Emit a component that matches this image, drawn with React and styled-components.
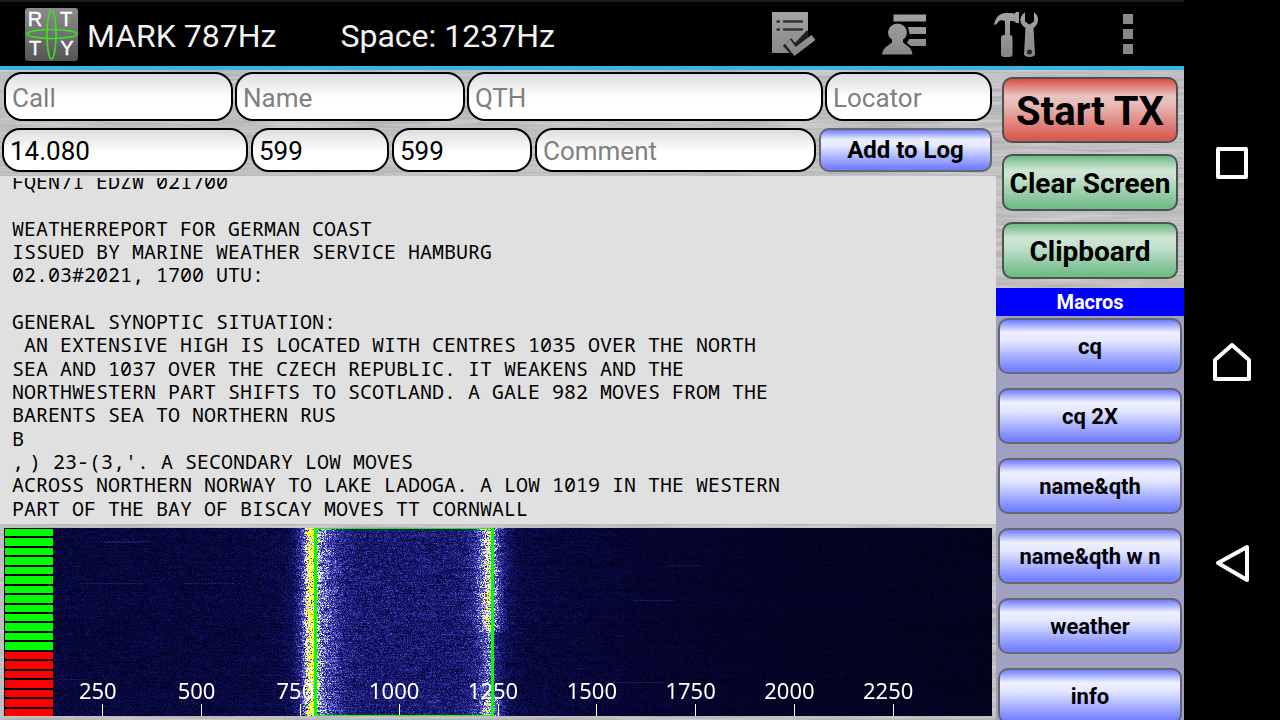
import React, { useEffect, useRef } from 'react';
import styled, { createGlobalStyle, css } from 'styled-components';

const GlobalStyle = createGlobalStyle`
  * {
    box-sizing: border-box;
  }
  body {
    margin: 0;
    background: #000;
    font-family: Roboto, sans-serif;
  }
  input, button {
    font-family: inherit;
    margin: 0;
  }
`;

const metal = `url("data:image/svg+xml,%3Csvg xmlns='http://www.w3.org/2000/svg' width='512' height='256'%3E%3Cfilter id='m' x='0' y='0' width='100%25' height='100%25' color-interpolation-filters='sRGB'%3E%3CfeTurbulence type='fractalNoise' baseFrequency='0.012 0.35' numOctaves='3' seed='4' stitchTiles='stitch'/%3E%3CfeColorMatrix values='0.22 0 0 0 0.64 0.22 0 0 0 0.64 0.22 0 0 0 0.64 0 0 0 0 1'/%3E%3C/filter%3E%3Crect width='512' height='256' filter='url(%23m)'/%3E%3C/svg%3E")`;

const Screen = styled.div`
  display: flex;
  height: 100vh;
  overflow: hidden;
`;
const AppPane = styled.div`
  flex: 1;
  min-width: 0;
  display: flex;
  flex-direction: column;
`;
const ActionBar = styled.header`
  flex: none;
  display: flex;
  align-items: center;
  height: 70px;
  padding: 2px 32px 0 24px;
  background: #000;
  border-top: 2px solid #1c1c1c;
  border-bottom: 4px solid #33b5e5;
  color: #f3f3f3;
`;
const Title = styled.h1`
  flex: 1;
  display: flex;
  gap: 64px;
  margin: 0 0 0 8px;
  padding-top: 2px;
  font-size: 32px;
  font-weight: 400;
  line-height: 40px;
  white-space: nowrap;
`;
const Actions = styled.div`
  display: flex;
  gap: 64px;
`;
const IconButton = styled.button`
  display: flex;
  padding: 0;
  border: none;
  background: none;
  cursor: pointer;
`;
const Body = styled.div`
  flex: 1;
  min-height: 0;
  display: flex;
  background: #bdbdbd ${metal};
`;
const Main = styled.main`
  flex: 1;
  min-width: 0;
  display: flex;
  flex-direction: column;
  gap: 4px;
  padding: 2px 0 4px;
`;
const LogForm = styled.form`
  display: flex;
  flex-direction: column;
  gap: 7px;
`;
const StationRow = styled.div`
  display: grid;
  grid-template-columns: 229fr 230fr 356fr 167fr;
  gap: 2px;
  height: 49px;
  padding: 0 4px;
`;
const ReportRow = styled.div`
  display: grid;
  grid-template-columns: 246fr 138fr 140fr 281fr 173fr;
  gap: 3px;
  height: 44px;
  padding: 0 4px 0 2px;
`;
const Field = styled.input`
  min-width: 0;
  width: 100%;
  height: 100%;
  padding: 2px 6px 0;
  border: 2px solid #000;
  border-radius: 18px;
  background: linear-gradient(#dedede, #fff 55%);
  color: #000;
  font-size: 26px;
  outline: none;
  &::placeholder {
    color: #808080;
    opacity: 1;
  }
`;

const tones = {
  blue: css`
    border-color: #66666e;
    background: linear-gradient(#6f7dff, #eef0ff 24%, #e4e8ff 40%, #727fff 96%);
  `,
  red: css`
    border-color: #505050;
    background: linear-gradient(#d94f46, #eac4c4 28%, #e8bcba 40%, #d95a50 96%);
  `,
  green: css`
    border-color: #505050;
    background: linear-gradient(#6cba84, #cde5d3 26%, #c8e2cf 40%, #70bc88 96%);
  `,
};
const PushButton = styled.button`
  flex: none;
  width: 100%;
  height: ${({ $height }) => $height}px;
  padding: ${({ $drop }) => $drop || 0}px 0 0;
  border: 2px solid;
  border-radius: 10px;
  color: #000;
  font-size: ${({ $size }) => $size}px;
  font-weight: 700;
  white-space: nowrap;
  cursor: pointer;
  ${({ $tone }) => tones[$tone]}
`;

const Received = styled.section`
  flex: 1;
  min-height: 0;
  display: flex;
  flex-direction: column;
  justify-content: flex-end;
  padding-bottom: 4px;
  border-top: 2px solid #e0e0e0;
  background: #e0e0e0;
  overflow: hidden;
`;
const Lines = styled.div`
  flex: none;
  display: grid;
  grid-auto-rows: 1fr;
  align-items: center;
  height: 350px;
  padding: 0 12px;
  color: #000;
  font-family: 'Droid Sans Mono', 'Noto Sans Mono', 'DejaVu Sans Mono', monospace;
  font-size: 20px;
  line-height: 23px;
  white-space: pre;
`;
const ControlCode = styled.span`
  display: inline-block;
  width: 5px;
`;

const Waterfall = styled.section`
  flex: none;
  display: grid;
  height: 188px;
  margin: 0 4px;
  background: #000;
  overflow: hidden;
  position: relative;
`;
const Spectrum = styled.canvas`
  grid-area: 1 / 1;
  display: block;
  width: 100%;
  height: 100%;
`;
const Meter = styled.div`
  grid-area: 1 / 1;
  display: grid;
  grid-auto-rows: 1fr;
  gap: 2px;
  width: 50px;
  padding: 1px 1px 0;
  background: #000;
`;
const Level = styled.span`
  background: ${({ $high }) => ($high ? '#00ff00' : '#ff0000')};
`;
const ShiftBox = styled.div`
  position: absolute;
  top: 0;
  bottom: 0;
  margin: 0 -1px;
  border: solid #00ff00;
  border-width: 1px 3px;
`;
const Tick = styled.div`
  position: absolute;
  bottom: 0;
  display: flex;
  flex-direction: column;
  align-items: center;
  width: 80px;
  margin-left: -45px;
  color: #fff;
  font-family: 'Noto Sans', sans-serif;
  font-size: 22px;
  line-height: 28px;
  &::after {
    content: '';
    width: 1px;
    height: 12px;
    margin-left: 10px;
    background: #fff;
  }
`;

const Side = styled.aside`
  flex: none;
  display: flex;
  flex-direction: column;
  width: 188px;
`;
const Commands = styled.div`
  flex: none;
  display: flex;
  flex-direction: column;
  gap: 11px;
  padding: 7px 6px 9px;
`;
const MacroTitle = styled.h2`
  flex: none;
  margin: 0;
  background: #0000ff;
  color: #fff;
  font-size: 20px;
  font-weight: 700;
  line-height: 28px;
  text-align: center;
`;
const MacroList = styled.div`
  flex: 1;
  min-height: 0;
  display: flex;
  flex-direction: column;
  gap: 14px;
  padding: 2px 2px 0;
  background: #a0a0c0;
  overflow: hidden;
`;

const NavBar = styled.nav`
  flex: none;
  display: flex;
  flex-direction: column;
  align-items: center;
  justify-content: center;
  gap: 160px;
  width: 96px;
  padding-top: 6px;
  background: #000;
`;

const Logo = () => (
  <svg width="55" height="55" viewBox="0 0 55 55" role="img" aria-label="RTTY">
    <defs>
      <linearGradient id="logoBg" x1="0" y1="0" x2="0" y2="1">
        <stop offset="0" stopColor="#8c8c8c" />
        <stop offset="1" stopColor="#555" />
      </linearGradient>
    </defs>
    <rect x="1" y="0" width="53" height="53" rx="3" fill="url(#logoBg)" />
    <g fill="#fff" stroke="#fff" strokeWidth="0.4" fontFamily="Liberation Sans, sans-serif" fontSize="20" textAnchor="middle">
      <text x="11" y="18">R</text>
      <text x="42" y="18">T</text>
      <text x="11" y="47">T</text>
      <text x="43" y="47">Y</text>
    </g>
    <g fill="none" stroke="#3be01f" strokeWidth="1.7">
      <ellipse cx="27.5" cy="26.5" rx="4.5" ry="24.5" />
      <ellipse cx="28" cy="26" rx="25" ry="4.5" />
    </g>
  </svg>
);

const GreyDef = ({ id }) => (
  <defs>
    <linearGradient id={id} x1="0" y1="0" x2="0" y2="48" gradientUnits="userSpaceOnUse">
      <stop offset="0" stopColor="#a4a4a4" />
      <stop offset="1" stopColor="#858585" />
    </linearGradient>
  </defs>
);

const LogIcon = () => (
  <svg width="48" height="48" viewBox="0 0 48 48">
    <GreyDef id="g1" />
    <path fill="url(#g1)" d="M4 1h36v41H4z" />
    <path stroke="#333" strokeWidth="2.4" strokeLinecap="round" d="M9.5 10.5h1.5M16 10.5h18M9.5 18.5h1.5M16 18.5h18" />
    <path stroke="#222" strokeWidth="11" fill="none" d="M19 31l8 9 16-17" />
    <path fill="#000" d="M40 14h8v34h-8zM30 42l10-11v17H20v-6z" />
    <path stroke="url(#g1)" strokeWidth="6.5" fill="none" d="M19.5 30.5l7.5 10 18.500-14" />
  </svg>
);

const ContactIcon = () => (
  <svg width="48" height="48" viewBox="0 0 48 48">
    <GreyDef id="g2" />
    <g fill="url(#g2)">
      <path d="M13.5 3.5H46v7H13.5zM28 16h18v7H29.5zM29 28h17v7H31l-4-3z" />
      <ellipse cx="17.5" cy="21.5" rx="9.5" ry="9" />
      <path d="M12 27h11v4c1 3 9 4 9.5 12.5H2C3 35 11 34 12 31z" />
    </g>
  </svg>
);

const ToolsIcon = () => (
  <svg width="48" height="48" viewBox="0 0 48 48">
    <GreyDef id="g3" />
    <g fill="url(#g3)">
      <path d="M2 14c1-7 5-12 12-12h6c2 1 3 1 4-1h3v11h-3c-1-2-3-2-6-2v14h-5V10c-4-2-7 0-8 3z" />
      <rect x="9" y="24" width="11.5" height="22" rx="3" />
      <path d="M33 1.5v9l4.5 3 4.5-3v-9c3 1.5 4.5 5 4 8.5-.5 3.5-2.5 5.5-4.5 7l1.500 26c0 4-11 4-11 0l1.500-26c-2.5-1.5-4.5-3.5-5-7-.5-3.5 1.500-7 4.500-8.500z" />
    </g>
    <circle cx="37.5" cy="41" r="2.5" fill="#222" />
  </svg>
);

const MoreIcon = () => (
  <svg width="48" height="48" viewBox="0 0 48 48">
    <path fill="#888" d="M19 3h10v10H19zM19 18h10v10H19zM19 33h10v10H19z" />
  </svg>
);

const NavIcon = ({ d }) => (
  <svg width="40" height="40" viewBox="0 0 40 40" fill="none" stroke="#fff" strokeWidth="4" strokeLinejoin="round">
    <path d={d} />
  </svg>
);

const MAX_HZ = 2500;
const MARK = 787;
const SPACE = 1237;
const percent = hz => `${(hz / MAX_HZ) * 100}%`;

// \x07 is an unprintable code that the receiver leaves in the text
const received = [
  'FQEN71 EDZW 021700',
  '',
  'WEATHERREPORT FOR GERMAN COAST',
  'ISSUED BY MARINE WEATHER SERVICE HAMBURG',
  '02.03#2021, 1700 UTU:',
  '',
  'GENERAL SYNOPTIC SITUATION:',
  ' AN EXTENSIVE HIGH IS LOCATED WITH CENTRES 1035 OVER THE NORTH',
  'SEA AND 1037 OVER THE CZECH REPUBLIC. IT WEAKENS AND THE',
  'NORTHWESTERN PART SHIFTS TO SCOTLAND. A GALE 982 MOVES FROM THE',
  'BARENTS SEA TO NORTHERN RUS',
  'B',
  ",\x07) 23-(3,'. A SECONDARY LOW MOVES",
  'ACROSS NORTHERN NORWAY TO LAKE LADOGA. A LOW 1019 IN THE WESTERN',
  'PART OF THE BAY OF BISCAY MOVES TT CORNWALL',
];
const macros = ['cq', 'cq 2X', 'name&qth', 'name&qth w n', 'weather', 'info'];
const ticks = [250, 500, 750, 1000, 1250, 1500, 1750, 2000, 2250];
const levels = Array.from({ length: 20 }, (_, i) => i < 13);

// signal strength -> colour, from black through blue and white to yellow
const palette = [
  [0, 0, 0, 0],
  [0.2, 6, 6, 62],
  [0.4, 30, 30, 132],
  [0.65, 100, 100, 215],
  [0.85, 235, 235, 255],
  [1, 255, 255, 255],
  [1.05, 255, 255, 0],
];
const colour = v => {
  for (let i = 1; i < palette.length; i++) {
    const a = palette[i - 1];
    const b = palette[i];
    if (v < b[0]) {
      const t = (v - a[0]) / (b[0] - a[0]);
      return [1, 2, 3].map(k => a[k] + (b[k] - a[k]) * t);
    }
  }
  return [255, 255, 0];
};

const bell = (d, w) => Math.exp(-((d / w) ** 2));

const strength = (hz, y) => {
  let base;
  if (hz < MARK) base = 0.19 + 0.1 * Math.exp((hz - MARK) / 80);
  else if (hz < SPACE) base = 0.34;
  else base = 0.08 + 0.14 * Math.exp((SPACE - hz) / 600);
  const off = hz - MARK + 10;
  const mark = 0.5 * bell(off, 15) + 0.35 * bell(off, off < 0 ? 34 : 62);
  const fade = y < 0.55 ? 1 : 0.5 + Math.max(0, y - 0.8) * 2;
  const gap = hz - SPACE + 8;
  const space = fade * (0.28 * bell(gap, 18) + 0.3 * bell(gap, 42));
  return base + mark + space;
};

const drawWaterfall = canvas => {
  const ctx = canvas.getContext('2d');
  const { width, height } = canvas;
  const image = ctx.createImageData(width, height);
  let seed = 787;
  const rand = () => {
    seed = (seed * 1664525 + 1013904223) >>> 0;
    return seed / 4294967296;
  };
  for (let y = 0; y < height; y++) {
    const row = (rand() - 0.5) * 0.03;
    let drift = 0;
    for (let x = 0; x < width; x++) {
      const s = strength((x / width) * MAX_HZ, y / height);
      drift = drift * 0.85 + (rand() - 0.5) * 0.25;
      const noise = (rand() + rand() - 1 + drift) * s * 0.65;
      const [r, g, b] = colour(Math.max(0, s + row + noise));
      const p = (y * width + x) * 4;
      image.data[p] = r;
      image.data[p + 1] = g;
      image.data[p + 2] = b;
      image.data[p + 3] = 255;
    }
  }
  ctx.putImageData(image, 0, 0);
  // faint interference streaks
  ctx.fillStyle = 'rgba(70, 70, 190, 0.4)';
  [[96, 13, 50], [76, 55, 62], [180, 55, 50], [100, 14, 34], [54, 151, 28], [665, 37, 32], [630, 72, 40], [600, 154, 60]].forEach(([x, y, w]) => {
    for (let i = 0; i < w; i += 3) ctx.fillRect(x + i, y, 2, 1);
  });
};

const SignalView = () => {
  const ref = useRef(null);
  useEffect(() => {
    drawWaterfall(ref.current);
  }, []);
  return (
    <Waterfall aria-label="Waterfall">
      <Spectrum ref={ref} width={988} height={188} />
      <Meter>
        {levels.map((high, i) => <Level key={i} $high={high} />)}
      </Meter>
      {ticks.map(hz => (
        <Tick key={hz} style={{ left: percent(hz) }}>{hz}</Tick>
      ))}
      <ShiftBox style={{ left: percent(MARK), right: percent(MAX_HZ - SPACE) }} />
    </Waterfall>
  );
};

const Line = ({ text }) => (
  <span>
    {text.split('\x07').map((part, i) => (
      <React.Fragment key={i}>
        {i > 0 && <ControlCode />}
        {part}
      </React.Fragment>
    ))}
  </span>
);

const App = () => (
  <Screen>
    <GlobalStyle />
    <AppPane>
      <ActionBar>
        <Logo />
        <Title>
          <span>MARK {MARK}Hz</span>
          <span>Space: {SPACE}Hz</span>
        </Title>
        <Actions>
          <IconButton aria-label="Log"><LogIcon /></IconButton>
          <IconButton aria-label="Contacts"><ContactIcon /></IconButton>
          <IconButton aria-label="Settings"><ToolsIcon /></IconButton>
          <IconButton aria-label="More"><MoreIcon /></IconButton>
        </Actions>
      </ActionBar>
      <Body>
        <Main>
          <LogForm onSubmit={e => e.preventDefault()}>
            <StationRow>
              <Field aria-label="Call" placeholder="Call" />
              <Field aria-label="Name" placeholder="Name" />
              <Field aria-label="QTH" placeholder="QTH" />
              <Field aria-label="Locator" placeholder="Locator" />
            </StationRow>
            <ReportRow>
              <Field aria-label="Frequency" defaultValue="14.080" />
              <Field aria-label="RST sent" defaultValue="599" />
              <Field aria-label="RST received" defaultValue="599" />
              <Field aria-label="Comment" placeholder="Comment" />
              <PushButton $tone="blue" $height={44} $size={24}>Add to Log</PushButton>
            </ReportRow>
          </LogForm>
          <Received>
            <Lines>
              {received.map((line, i) => <Line key={i} text={line} />)}
            </Lines>
          </Received>
          <SignalView />
        </Main>
        <Side>
          <Commands>
            <PushButton $tone="red" $height={66} $size={40} $drop={2}>Start TX</PushButton>
            <PushButton $tone="green" $height={57} $size={28} $drop={2}>Clear Screen</PushButton>
            <PushButton $tone="green" $height={57} $size={28} $drop={2}>Clipboard</PushButton>
          </Commands>
          <MacroTitle>Macros</MacroTitle>
          <MacroList>
            {macros.map(name => (
              <PushButton key={name} $tone="blue" $height={56} $size={22}>{name}</PushButton>
            ))}
          </MacroList>
        </Side>
      </Body>
    </AppPane>
    <NavBar>
      <IconButton aria-label="Recent apps"><NavIcon d="M6 6h28v28H6z" /></IconButton>
      <IconButton aria-label="Home"><NavIcon d="M20 2l17 15v19H3V17z" /></IconButton>
      <IconButton aria-label="Back"><NavIcon d="M35 4v33L6 20z" /></IconButton>
    </NavBar>
  </Screen>
);

export default App;
